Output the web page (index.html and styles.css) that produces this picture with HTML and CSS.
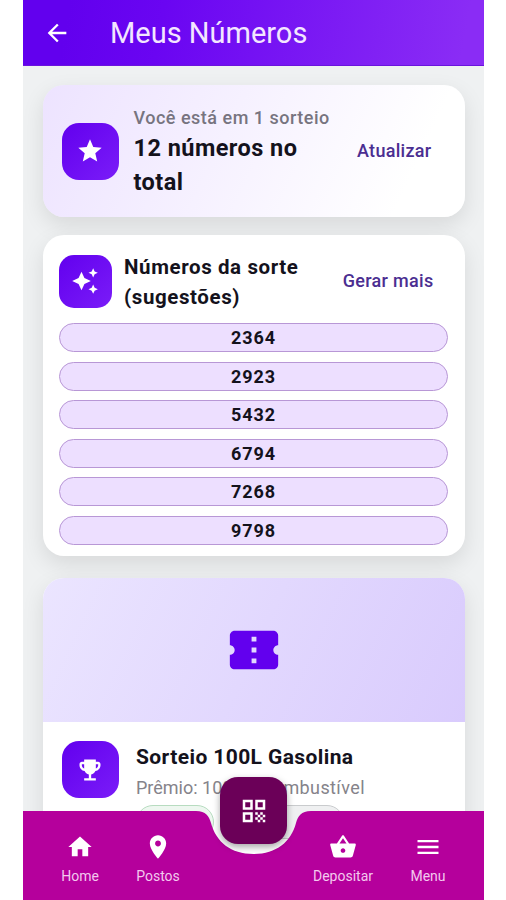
FILE: index.html
```html
<!DOCTYPE html>
<html lang="pt-BR">
<head>
    <meta charset="UTF-8">
    <meta name="viewport" content="width=device-width, initial-scale=1.0">
    <title>Meus Números</title>
    <link rel="stylesheet" href="styles.css">
</head>
<body>

<div class="app">

<header class="topbar">
    <svg class="back" viewBox="0 0 24 24"><path d="M20 11H7.83l5.59-5.59L12 4l-8 8 8 8 1.41-1.41L7.83 13H20v-2z"/></svg>
    <h1>Meus Números</h1>
</header>

<main class="content">
    <section class="card summary">
        <div class="tile"><svg viewBox="0 0 24 24"><path d="M12 17.27L18.18 21l-1.64-7.03L22 9.24l-7.19-.61L12 2 9.19 8.63 2 9.24l5.46 4.73L5.82 21z"/></svg></div>
        <div class="summary-text">
            <p class="label">Você está em 1 sorteio</p>
            <p class="total">12 números no<br>total</p>
        </div>
        <a href="#" class="action">Atualizar</a>
    </section>

    <section class="card lucky">
        <div class="lucky-head">
            <div class="tile small"><svg viewBox="0 0 24 24"><path d="M19 9l1.25-2.75L23 5l-2.75-1.25L19 1l-1.25 2.75L15 5l2.75 1.25L19 9zm-7.5.5L9 4 6.5 9.5 1 12l5.5 2.5L9 20l2.500-5.500L17 12l-5.500-2.500zM19 15l-1.250 2.750L15 19l2.750 1.250L19 23l1.250-2.750L23 19l-2.750-1.250L19 15z"/></svg></div>
            <h2>Números da sorte<br>(sugestões)</h2>
            <a href="#" class="action">Gerar mais</a>
        </div>
        <ul class="numbers">
            <li>2364</li>
            <li>2923</li>
            <li>5432</li>
            <li>6794</li>
            <li>7268</li>
            <li>9798</li>
        </ul>
    </section>

    <section class="card raffle">
        <div class="banner">
            <svg viewBox="0 0 24 24"><path d="M22 10V6c0-1.110-.9-2-2-2H4c-1.100 0-1.990.89-1.990 2v4c1.100 0 1.990.9 1.990 2s-.89 2-2 2v4c0 1.100.9 2 2 2h16c1.100 0 2-.9 2-2v-4c-1.100 0-2-.9-2-2s.9-2 2-2zm-9 7.500h-2v-2h2v2zm0-4.500h-2v-2h2v2zm0-4.500h-2v-2h2v2z"/></svg>
        </div>
        <div class="raffle-body">
            <div class="tile"><svg viewBox="0 0 24 24"><path d="M19 5h-2V3H7v2H5c-1.100 0-2 .9-2 2v1c0 2.550 1.920 4.630 4.390 4.940.63 1.500 1.980 2.630 3.610 2.960V19H7v2h10v-2h-4v-3.100c1.630-.33 2.980-1.460 3.610-2.960C19.080 12.630 21 10.550 21 8V7c0-1.100-.9-2-2-2zM5 8V7h2v3.820C5.840 10.400 5 9.300 5 8zm14 0c0 1.300-.84 2.400-2 2.820V7h2v1z"/></svg></div>
            <div class="raffle-text">
                <h3>Sorteio 100L Gasolina</h3>
                <p>Prêmio: 100L <span class="fuel">Combustível</span></p>
                <div class="chips"><span class="chip green"></span><span class="chip"></span></div>
            </div>
        </div>
    </section>
</main>

<nav class="bottombar">
    <svg class="shape" viewBox="0 0 461 89"><path d="M0 0H173C183 0 186 5 188 12C193 31 208 43 230.500 43S268 31 273 12C275 5 278 0 288 0H461V89H0z"/></svg>
    <a href="#" class="item home">
        <svg viewBox="0 0 24 24"><path d="M10 20v-6h4v6h5v-8h3L12 3 2 12h3v8z"/></svg>
        Home
    </a>
    <a href="#" class="item places">
        <svg viewBox="0 0 24 24"><path d="M12 2C8.130 2 5 5.130 5 9c0 5.250 7 13 7 13s7-7.750 7-13c0-3.870-3.130-7-7-7zm0 9.500c-1.380 0-2.500-1.120-2.500-2.500s1.120-2.500 2.500-2.500 2.500 1.120 2.500 2.500-1.120 2.500-2.500 2.500z"/></svg>
        Postos
    </a>
    <a href="#" class="item deposit">
        <svg viewBox="0 0 24 24"><path d="M17.210 9l-4.380-6.560c-.19-.28-.51-.42-.83-.42s-.64.14-.83.43L6.790 9H2c-.55 0-1 .45-1 1 0 .09.010.18.040.27l2.540 9.270c.23.84 1 1.460 1.920 1.460h13c.92 0 1.690-.62 1.930-1.460l2.540-9.270L23 10c0-.55-.45-1-1-1h-4.790zM9 9l3-4.400L15 9H9zm3 8c-1.100 0-2-.9-2-2s.9-2 2-2 2 .9 2 2-.9 2-2 2z"/></svg>
        Depositar
    </a>
    <a href="#" class="item menu">
        <svg viewBox="0 0 24 24"><path d="M3 18h18v-2H3v2zm0-5h18v-2H3v2zm0-7v2h18V6H3z"/></svg>
        Menu
    </a>
    <a href="#" class="fab">
        <svg viewBox="0 0 24 24"><path fill-rule="evenodd" d="M3 11h8V3H3v8zm2-6h4v4H5V5zM3 21h8v-8H3v8zm2-6h4v4H5v-4zM13 3v8h8V3h-8zm6 6h-4V5h4v4zM19 19h2v2h-2zM13 13h2v2h-2zM15 15h2v2h-2zM13 17h2v2h-2zM15 19h2v2h-2zM17 17h2v2h-2zM17 13h2v2h-2zM19 15h2v2h-2z"/></svg>
    </a>
</nav>

</div>

</body>
</html>
```
FILE: styles.css
```css
* {box-sizing: border-box; margin: 0; padding: 0;}
body {
    background: #fff;
    font-family: Roboto, "Liberation Sans", sans-serif;
    color: #14121c;
}
a {text-decoration: none;}
svg {display: block; fill: #fff;}

.app {
    position: relative;
    display: flex;
    flex-direction: column;
    width: 461px;
    height: 900px;
    margin: 0 auto 0 23px;
    overflow: hidden;
    background: #eff1f2;
}

/* top bar */
.topbar {
    display: flex;
    align-items: center;
    gap: 39px;
    height: 66px;
    flex: none;
    padding-left: 20px;
    background: linear-gradient(100deg, #6200ee 10%, #6a05f2 30%, #8a2cf5 95%);
    border-bottom: 1px solid #6a14dc;
}
.topbar .back {width: 28px; height: 28px;}
.topbar h1 {font-size: 29px; line-height: 34px; font-weight: 400; color: #f3e6ff;}

/* cards */
.content {
    flex: 1;
    display: flex;
    flex-direction: column;
    padding: 19px 19.500px 0;
}
.card {
    flex: none;
    border-radius: 21px;
    background: #fff;
    box-shadow: 0 8px 22px rgba(0, 0, 0, 0.1);
}
.tile {
    flex: none;
    display: flex;
    align-items: center;
    justify-content: center;
    width: 57px;
    height: 57px;
    border-radius: 17px;
    background: linear-gradient(135deg, #6200ee, #7a1cf8);
}
.tile svg {width: 28px; height: 28px;}
.tile.small {width: 53px; height: 53px; border-radius: 15px;}
.action {padding-bottom: 1px; font-size: 18px; font-weight: 500; color: #4b2e91; letter-spacing: 0.3px;}

.summary {
    display: flex;
    align-items: center;
    height: 132px;
    padding: 0 33px 0 19px;
    background: linear-gradient(115deg, #ede3ff, #fff 85%);
}
.summary-text {flex: 1; padding: 2px 0 0 15px;}
.summary .label {font-size: 18px; line-height: 26px; font-weight: 500; color: #77747f; letter-spacing: 0.5px;}
.summary .total {font-size: 23.500px; line-height: 34px; font-weight: 700; letter-spacing: 0.45px;}

.lucky {height: 321px; margin-top: 18px; padding: 16px 17px 0 16px;}
.lucky-head {display: flex; align-items: center; height: 60px; padding-right: 14px;}
.lucky-head h2 {
    flex: 1;
    padding: 2px 0 0 12.500px;
    font-size: 20.500px;
    line-height: 30px;
    font-weight: 700;
    letter-spacing: 0.6px;
}
.numbers {display: flex; flex-direction: column; gap: 9.500px; margin-top: 12px; list-style: none;}
.numbers li {
    height: 29px;
    border: 1px solid #b897d6;
    border-radius: 15px;
    background: #eddfff;
    font-size: 18px;
    line-height: 27px;
    font-weight: 700;
    letter-spacing: 0.9px;
    text-indent: 1px;
    text-align: center;
}

.raffle {height: 330px; margin-top: 22px; overflow: hidden;}
.banner {
    display: flex;
    align-items: center;
    justify-content: center;
    height: 144px;
    background: linear-gradient(115deg, #ebe5ff, #d9cbfd);
}
.banner svg {width: 58px; height: 58px; fill: #6200ee;}
.raffle-body {display: flex; padding: 19px;}
.raffle-text {padding-left: 17.500px;}
.raffle-text h3 {font-size: 21px; line-height: 32px; font-weight: 700; letter-spacing: 0.4px;}
.raffle-text p {font-size: 18px; line-height: 30px; color: #85838a;}
.raffle-text .fuel {margin-left: 14px; letter-spacing: 0.4px;}
.chips {display: flex; gap: 8px; margin-top: 2px;}
.chip {width: 122px; height: 34px; border: 1px solid #c9cbcd; border-radius: 17px; background: #eff0f1;}
.chip.green {width: 78px; border-color: #b7dcc0; background: #eef7f0;}

/* bottom bar with the notch for the QR button */
.bottombar {position: absolute; left: 0; bottom: 0; width: 461px; height: 89px;}
.shape {position: absolute; left: 0; top: 0; width: 461px; height: 89px; fill: #b5009c;}
.item {
    position: absolute;
    top: 22px;
    display: flex;
    flex-direction: column;
    align-items: center;
    gap: 7px;
    width: 80px;
    font-size: 14px;
    line-height: 16px;
    color: #f3c9ee;
}
.item svg {width: 28px; height: 28px;}
.home {left: 17px;}
.places {left: 95px;}
.deposit {left: 280px;}
.menu {left: 365px;}
.fab {
    position: absolute;
    left: 197px;
    top: -34px;
    display: flex;
    align-items: center;
    justify-content: center;
    width: 67px;
    height: 67px;
    border-radius: 18px;
    background: #6b0058;
    box-shadow: 0 3px 7px rgba(0, 0, 0, 0.35);
}
.fab svg {width: 30px; height: 30px;}
```
